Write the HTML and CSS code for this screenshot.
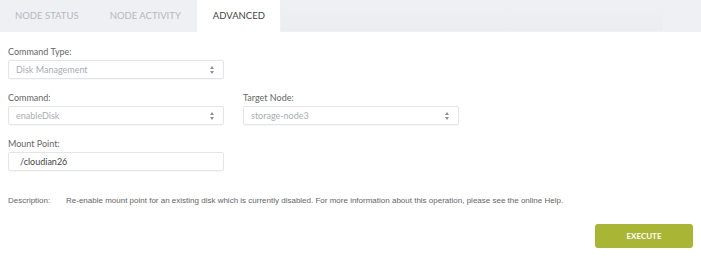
FILE: index.html
```html
<!DOCTYPE html>
<html lang="en">
<head>
    <meta charset="UTF-8">
    <title>Advanced</title>
    <link rel="stylesheet" href="styles.css">
</head>
<body>

<div class="tabs">
    <div class="tab">NODE STATUS</div>
    <div class="tab">NODE ACTIVITY</div>
    <div class="tab active">ADVANCED</div>
    <div class="tab-fill"></div>
</div>

<div class="panel">
    <div class="row">
        <div class="field">
            <label>Command Type:</label>
            <div class="select">
                <span>Disk Management</span>
                <span class="arrows"></span>
            </div>
        </div>
    </div>

    <div class="row">
        <div class="field">
            <label>Command:</label>
            <div class="select">
                <span>enableDisk</span>
                <span class="arrows"></span>
            </div>
        </div>
        <div class="field">
            <label>Target Node:</label>
            <div class="select">
                <span>storage-node3</span>
                <span class="arrows"></span>
            </div>
        </div>
    </div>

    <div class="row">
        <div class="field">
            <label>Mount Point:</label>
            <div class="input">/cloudian26</div>
        </div>
    </div>

    <div class="description">
        <span class="desc-label">Description:</span>
        <span>Re-enable mount point for an existing disk which is currently disabled. For more information about this operation, please see the online Help.</span>
    </div>

    <div class="actions">
        <button class="execute">EXECUTE</button>
    </div>
</div>

</body>
</html>
```

FILE: styles.css
```css
body {
    margin: 0;
    font-family: Lato, "Open Sans", sans-serif;
    background: #ffffff;
    color: #333;
}

.tabs {
    display: flex;
    height: 32px;
    background: #eff0f4;
}

.tab {
    font-size: 9.5px;
    color: #b4b8bf;
    padding: 0 15px;
    line-height: 31px;
    margin-right: 1px;
}

.tab.active {
    background: #ffffff;
    color: #444;
    padding: 0 15px 0 16px;
}

.tab-fill {
    flex: 1;
    margin: 3px 38px 1px 0;
    background: linear-gradient(#eef0f3, #ebeef1);
}

.panel {
    padding: 14px 8px 0 8px;
}

.row {
    display: flex;
    gap: 19px;
    margin-bottom: 13px;
}

.field {
    width: 216px;
}

.field label {
    display: block;
    font-size: 9px;
    color: #666;
    margin-bottom: 3px;
}

.select,
.input {
    box-sizing: border-box;
    height: 19px;
    border: 1px solid #e3e5e8;
    border-radius: 2px;
    font-size: 9px;
    display: flex;
    align-items: center;
    justify-content: space-between;
    padding: 0 8px 0 7px;
    color: #a9adb3;
    box-shadow: 0 1px 1px rgba(0, 0, 0, 0.03);
}

.input {
    color: #444;
    padding-left: 11px;
}

.arrows {
    position: relative;
    width: 5px;
    height: 8px;
}

.arrows::before,
.arrows::after {
    content: "";
    position: absolute;
    left: 0;
    border-left: 2.5px solid transparent;
    border-right: 2.5px solid transparent;
}

.arrows::before {
    top: 0;
    border-bottom: 3px solid #8c9097;
}

.arrows::after {
    bottom: 0;
    border-top: 3px solid #8c9097;
}

.description {
    display: flex;
    font-family: "Liberation Sans", Arial, sans-serif;
    font-size: 8px;
    color: #666;
    margin-top: 25px;
}

.desc-label {
    width: 58px;
    flex-shrink: 0;
}

.actions {
    display: flex;
    justify-content: flex-end;
    margin-top: 19px;
}

.execute {
    width: 98px;
    height: 24px;
    border: none;
    border-radius: 3px;
    background: #a9b535;
    color: #ffffff;
    font-family: Lato, sans-serif;
    font-weight: bold;
    font-size: 8px;
    cursor: pointer;
}
```
